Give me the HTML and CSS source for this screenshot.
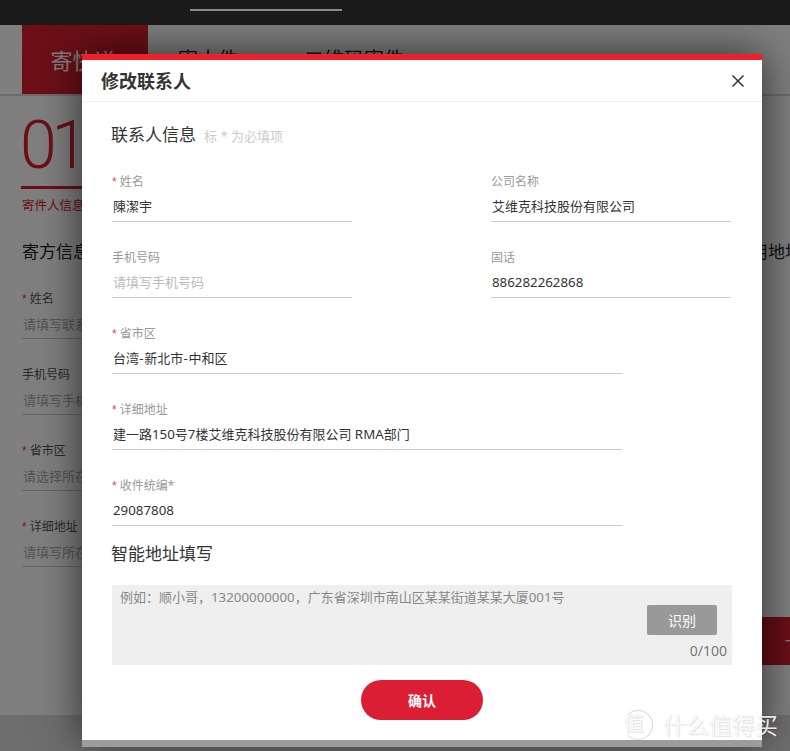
FILE: index.html
```html
<!DOCTYPE html>
<html lang="zh-CN">
<head>
<meta charset="utf-8">
<title>修改联系人</title>
<link rel="stylesheet" href="styles.css">
</head>
<body>
<div class="page">
  <header class="topbar"><span class="topbar-line"></span></header>
  <nav class="tabs">
    <span class="tab tab-active">寄快递</span>
    <span class="tab tab-second">寄大件</span>
    <span class="tab tab-third">二维码寄件</span>
  </nav>
  <main class="content">
    <div class="bg-left">
      <div class="step-num">01</div>
      <div class="step-rule"></div>
      <div class="step-name">寄件人信息</div>
      <div class="bg-title">寄方信息</div>
      <div class="bg-field"><div class="bg-label"><i>*</i> 姓名</div><div class="bg-value">请填写联系人姓名</div></div>
      <div class="bg-field"><div class="bg-label">手机号码</div><div class="bg-value">请填写手机号码</div></div>
      <div class="bg-field"><div class="bg-label"><i>*</i> 省市区</div><div class="bg-value">请选择所在地区</div></div>
      <div class="bg-field"><div class="bg-label"><i>*</i> 详细地址</div><div class="bg-value">请填写所在地址</div></div>
    </div>
    <div class="bg-right">
      <div class="bg-right-title">常用地址</div>
      <div class="bg-next">一</div>
    </div>
  </main>
  <footer class="bg-footer"></footer>
</div>
<div class="overlay"></div>
<section class="modal">
  <div class="modal-head">
    <h2 class="modal-title">修改联系人</h2>
    <svg class="close" width="14" height="14" viewBox="0 0 14 14"><path d="M1.5 1.5 12.5 12.5M12.5 1.5 1.5 12.5" fill="none" stroke="#333" stroke-width="1.5"/></svg>
  </div>
  <div class="modal-body">
    <div class="section-head"><span class="section-title">联系人信息</span><span class="section-note">标 * 为必填项</span></div>
    <div class="row">
      <div class="field"><div class="label"><i>*</i> 姓名</div><div class="value">陳潔宇</div></div>
      <div class="field"><div class="label">公司名称</div><div class="value">艾维克科技股份有限公司</div></div>
    </div>
    <div class="row">
      <div class="field"><div class="label">手机号码</div><div class="value placeholder">请填写手机号码</div></div>
      <div class="field"><div class="label">固话</div><div class="value"><span class="lat">886282262868</span></div></div>
    </div>
    <div class="field wide"><div class="label"><i>*</i> 省市区</div><div class="value">台湾<span class="hy">-</span>新北市<span class="hy">-</span>中和区</div></div>
    <div class="field wide"><div class="label"><i>*</i> 详细地址</div><div class="value">建一路<span class="lat">150</span>号<span class="lat">7</span>楼艾维克科技股份有限公司 <span class="lat">RMA</span>部门</div></div>
    <div class="field wide"><div class="label"><i>*</i> 收件统编*</div><div class="value"><span class="lat">29087808</span></div></div>
    <div class="smart-title">智能地址填写</div>
    <div class="smart-box">
      <div class="smart-text">例如：顺小哥，<span class="lat">13200000000</span>，广东省深圳市南山区某某街道某某大厦<span class="lat">001</span>号</div>
      <div class="smart-foot">
        <button class="recognize">识别</button>
        <div class="count">0/100</div>
      </div>
    </div>
    <div class="actions"><button class="confirm">确认</button></div>
  </div>
</section>
<div class="watermark">
  <span class="wm-mark">值</span><span class="wm-text">什么值得买</span>
</div>
</body>
</html>
```
FILE: styles.css
```css
* { box-sizing: border-box; }
html, body { margin: 0; padding: 0; height: 751px; overflow: hidden; }
body {
  font-family: "Noto Sans", "Noto Sans CJK SC", sans-serif;
  background: #7f7f7f;
  color: #333;
}
i { font-style: normal; font-family: "Liberation Sans", sans-serif; color: #e8404a; }

/* page behind the dialog */
.page { width: 790px; height: 751px; display: flex; flex-direction: column; background: #fff; }
.topbar { height: 25px; background: #1a1a1a; padding: 9px 0 0 190px; flex: none; position: relative; z-index: 3; }
.topbar-line { display: block; width: 152px; height: 2px; background: #8a8a8a; }
.tabs { height: 71px; flex: none; display: flex; padding-left: 22px; border-bottom: 2px solid #d8d8d8; }
.tab { padding-top: 20px; font-size: 20px; line-height: 30px; color: #222; white-space: nowrap; }
.tab-active { width: 126px; font-size: 22px; padding-right: 3px; text-align: center; background: #d81e2e; color: #fff; }
.tab-second { margin-left: 30px; }
.tab-third { margin-left: 66px; }
.content { flex: 1; display: flex; justify-content: space-between; padding: 0 0 0 22px; }
.bg-left { width: 280px; }
.step-num { font-family: Roboto, sans-serif; font-weight: 300; font-size: 66px; letter-spacing: -5px; line-height: 60px; margin: 20px 0 0 -2px; height: 60px; color: #d81e2e; }
.step-rule { width: 120px; height: 3px; background: #d81e2e; margin: 10px 0 0 -1px; }
.step-name { font-size: 12.5px; line-height: 18px; color: #d81e2e; margin-top: 8px; }
.bg-title { font-size: 17px; line-height: 24px; margin-top: 25px; color: #222; }
.bg-field { width: 240px; height: 76px; padding-top: 26px; }
.bg-label { font-size: 12px; line-height: 18px; color: #555; }
.bg-value { font-size: 13px; line-height: 18px; color: #aaa; margin-top: 7px; padding: 0 1px 5px; border-bottom: 1px solid #c8c8c8; white-space: nowrap; overflow: hidden; }
.bg-right { width: 55px; flex: none; display: flex; flex-direction: column; justify-content: space-between; }
.bg-right-title { font-size: 17px; line-height: 24px; margin: 144px 0 0 -1px; white-space: nowrap; color: #222; }
.bg-next { height: 48px; margin-bottom: 50px; background: linear-gradient(90deg, #b01424, #d81e2e); color: #fff; font-size: 14px; line-height: 48px; padding-left: 50px; overflow: hidden; }
.bg-footer { height: 36px; flex: none; background: #ddd; }

.overlay { position: absolute; inset: 0; background: rgba(0,0,0,.5); z-index: 1; }

/* dialog */
.modal {
  position: absolute; left: 82px; top: 54px; width: 680px; height: 686px; z-index: 2;
  background: #fff; border-top: 6px solid #f0202a;
  box-shadow: 0 7px 0 #9c9c9c, 0 0 40px rgba(0,0,0,.65);
}
.modal-head { height: 42px; border-bottom: 1px solid #eee; display: flex; align-items: center; justify-content: space-between; padding: 0 17px 0 19px; }
.modal-title { margin: 0; font-size: 18px; line-height: 24px; font-weight: 700; color: #333; }
.close { display: block; }
.modal-body { padding: 0 30px; }
.section-head { display: flex; align-items: baseline; margin: 21px 0 0 -1px; height: 24px; }
.section-title { font-size: 17px; line-height: 24px; color: #333; }
.section-note { font-size: 13px; line-height: 24px; color: #ccc; margin-left: 8px; }
.row { display: flex; justify-content: space-between; width: 619px; }
.field { width: 240px; height: 76px; padding-top: 26px; }
.field.wide { width: 510px; }
.label { font-size: 12px; line-height: 18px; color: #999; }
.value { font-size: 13px; line-height: 18px; color: #333; margin-top: 6px; padding: 0 0 5px 1px; border-bottom: 1px solid #ccc; height: 25px; white-space: nowrap; }
.value.placeholder { color: #bbb; }
.lat { font-size: 13.3px; }
.hy { letter-spacing: .8px; padding-left: .2px; }
.smart-title { font-size: 17px; line-height: 24px; color: #333; margin: 15px 0 0 -1px; }
.smart-box { width: 620px; height: 80px; margin-top: 19px; background: #efefef; padding: 3px 5px 0 8px; display: flex; flex-direction: column; }
.smart-text { font-size: 13px; line-height: 18px; color: #888; white-space: nowrap; }
.smart-foot { display: flex; flex-direction: column; align-items: flex-end; }
.recognize { width: 70px; height: 30px; border: 0; border-radius: 2px; margin: -1px 10px 0 0; background: #999; color: #fff; font: inherit; font-size: 14px; padding: 0; }
.count { font-size: 14px; line-height: 18px; color: #777; margin-top: 7px; }
.actions { display: flex; justify-content: center; margin-top: 15px; }
.confirm { width: 122px; height: 40px; border: 0; border-radius: 20px; background: #dc1e35; color: #fff; font: inherit; font-size: 14px; font-weight: 700; padding: 0; }

/* site watermark */
.watermark { position: absolute; left: 623px; top: 710px; z-index: 4; display: flex; align-items: center; color: rgba(255,255,255,.9); text-shadow: 0 0 1px rgba(0,0,0,.14), 1px 1px 1px rgba(0,0,0,.1); }
.wm-mark { width: 30px; height: 30px; border: 1px solid #d8d8d8; border-left-color: transparent; border-radius: 50%; font-size: 20px; line-height: 26px; text-align: left; }
.wm-text { font-size: 23px; line-height: 30px; margin-left: 10px; }
```
